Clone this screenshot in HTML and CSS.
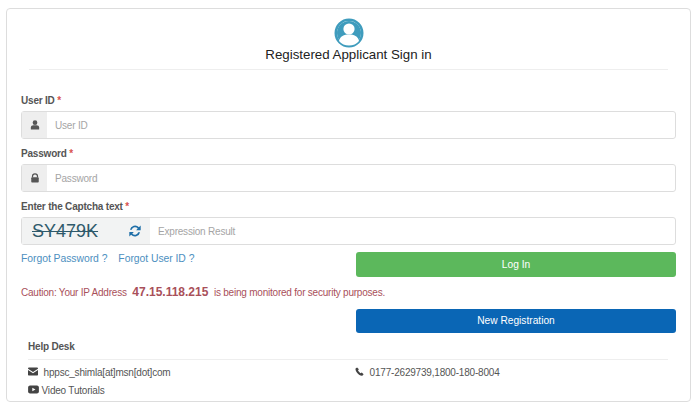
FILE: index.html
```html
<!DOCTYPE html>
<html lang="en">
<head>
    <meta charset="UTF-8">
    <meta name="viewport" content="width=device-width, initial-scale=1.0">
    <title>Registered Applicant Sign in</title>
    <link rel="stylesheet" href="styles.css">
</head>
<body>
    <div class="card">
        <div class="header">
            <svg class="avatar" viewBox="0 0 30 30" width="30" height="30">
                <circle cx="15" cy="15" r="13.2" fill="#fff" stroke="#3f9cbd" stroke-width="2.6"/>
                <circle cx="15" cy="15" r="12" fill="#3f9cbd"/>
                <circle cx="15" cy="11" r="5.6" fill="#fff"/>
                <path d="M5 23c1-5 5-6.500 10-6.500s9 1.500 10 6.500c-2.500 3-6 4.500-10 4.500s-7.500-1.500-10-4.500z" fill="#fff"/>
            </svg>
            <h2>Registered Applicant Sign in</h2>
        </div>

        <label class="field-label label-first">User ID <span class="req">*</span></label>
        <div class="input-group">
            <span class="addon">
                <svg viewBox="0 0 12 12" width="10" height="10"><circle cx="6" cy="3.200" r="2.800" fill="#555"/><path d="M1 11.500V9c0-1.800 1.500-2.800 3-2.800h4c1.500 0 3 1 3 2.800v2.500z" fill="#555"/></svg>
            </span>
            <span class="input">User ID</span>
        </div>

        <label class="field-label">Password <span class="req">*</span></label>
        <div class="input-group">
            <span class="addon">
                <svg viewBox="0 0 12 12" width="10" height="10"><path d="M3 5.500V4a3 3 0 0 1 6 0v1.500" fill="none" stroke="#555" stroke-width="1.500"/><rect x="1.500" y="5.200" width="9" height="6.300" rx="1" fill="#555"/></svg>
            </span>
            <span class="input">Password</span>
        </div>

        <label class="field-label">Enter the Captcha text <span class="req">*</span></label>
        <div class="input-group">
            <span class="addon addon-captcha">
                <span class="captcha">SY479K</span>
                <svg viewBox="0 0 16 16" width="14" height="14"><path d="M2.200 6.500A6 6 0 0 1 12.500 3.600L14.500 1.800V7H9.300l1.800-1.900A4 4 0 0 0 4.300 6.500z" fill="#1f6fa8"/><path d="M13.800 9.500A6 6 0 0 1 3.500 12.400L1.500 14.200V9h5.200l-1.800 1.900a4 4 0 0 0 6.800-1.400z" fill="#1f6fa8"/></svg>
            </span>
            <span class="input">Expression Result</span>
        </div>

        <div class="two-col action-row">
            <div class="links">
                <a href="#">Forgot Password ?</a>
                <a href="#">Forgot User ID ?</a>
            </div>
            <button class="btn btn-login">Log In</button>
        </div>

        <p class="caution">Caution: Your IP Address <b>47.15.118.215</b> is being monitored for security purposes.</p>

        <div class="two-col">
            <div></div>
            <button class="btn btn-register">New Registration</button>
        </div>

        <div class="help">
            <h4>Help Desk</h4>
            <div class="help-row">
                <span class="help-item">
                    <svg viewBox="0 0 12 10" width="10" height="9"><path d="M0 1.500A1.200 1.200 0 0 1 1.200.3h9.600A1.200 1.200 0 0 1 12 1.500v.3L6 5.600 0 1.800z" fill="#444"/><path d="M0 3.200l6 3.800 6-3.800v5.500a1 1 0 0 1-1.200 1H1.200a1 1 0 0 1-1.200-1z" fill="#444"/></svg>
                    hppsc_shimla[at]msn[dot]com
                </span>
                <span class="help-item help-phone">
                    <svg viewBox="0 0 12 12" width="9" height="9"><path d="M2.800.6L1 1.800C.3 3 .6 5 2.700 7.800 5 10.800 8 12 9.800 11.500l1.700-1.800-2.500-2.500-1.600 1C6.500 7.800 4.800 6 4 4.300l1.200-1.400z" fill="#444"/></svg>
                    0177-2629739,1800-180-8004
                </span>
            </div>
            <div class="help-video">
                <svg viewBox="0 0 12 10" width="11" height="9"><rect y=".5" width="12" height="9" rx="2.200" fill="#444"/><path d="M4.700 3v4l3.500-2z" fill="#fff"/></svg>
                Video Tutorials
            </div>
        </div>
    </div>
</body>
</html>
```

FILE: styles.css
```css
* {
    box-sizing: border-box;
}

body {
    font-family: "Liberation Sans", Arial, sans-serif;
    font-size: 10px;
    letter-spacing: -0.2px;
    color: #555;
    margin: 0;
    padding: 8px 5px 0 6px;
    background: #fff;
}

.card {
    height: 394px;
    background: white;
    padding: 9px 14px 0 14px;
    border: 1px solid #ddd;
    border-radius: 4px;
    overflow: hidden;
}

.header {
    text-align: center;
    margin: 0 8px;
    height: 52px;
    border-bottom: 1px solid #eee;
}
.avatar {
    display: block;
    margin: 0 auto;
}
.header h2 {
    font-size: 13.3px;
    font-weight: normal;
    letter-spacing: 0;
    line-height: 14px;
    color: #222;
    margin: 0;
}

.field-label {
    display: block;
    font-weight: bold;
    line-height: 12px;
    height: 12px;
    margin: 9px 0 4px 0;
}
.label-first {
    margin-top: 25px;
}
.req {
    color: #d9534f;
}

.input-group {
    display: flex;
    height: 28px;
    border: 1px solid #ddd;
    border-radius: 3px;
    background: #fff;
}
.addon {
    display: flex;
    align-items: center;
    justify-content: center;
    width: 25px;
    background: #eee;
}
.addon-captcha {
    width: 128px;
    justify-content: space-between;
    padding: 0 8px 0 10px;
    background: #f2f3f3;
}
.captcha {
    font-size: 18px;
    letter-spacing: 0;
    color: #2f5a6b;
    text-decoration: line-through;
}
.input {
    display: flex;
    align-items: center;
    padding-left: 8px;
    color: #a5a5a5;
}

.two-col {
    display: grid;
    grid-template-columns: 1fr 320px;
    gap: 15px;
}
.action-row {
    margin-top: 7px;
}
.links {
    font-size: 10.4px;
    letter-spacing: -0.05px;
    padding-top: 1px;
    display: flex;
    gap: 11px;
}
.links a {
    color: #4d8fc0;
    text-decoration: none;
}

.btn {
    height: 24.500px;
    border: none;
    border-radius: 3px;
    color: white;
    font-family: inherit;
    font-size: 10.2px;
    letter-spacing: 0;
    cursor: pointer;
}
.btn-login {
    background-color: #5cb85c;
}
.btn-register {
    background-color: #0a66b5;
}

.caution {
    color: #a9505a;
    letter-spacing: -0.22px;
    line-height: 14px;
    margin: 8px 0 9px 0;
}
.caution b {
    font-size: 12px;
    letter-spacing: 0;
    margin: 0 3px;
}

.help {
    margin: 8px 8px 0 7px;
}
.help h4 {
    font-size: 10px;
    line-height: 12px;
    margin: 0;
    padding-bottom: 6px;
    border-bottom: 1px solid #eee;
}
.help-row {
    display: grid;
    grid-template-columns: 1fr 313px;
    gap: 15px;
    margin-top: 7px;
    line-height: 12px;
}
.help-item svg {
    margin-right: 3px;
}
.help-video {
    margin-top: 6px;
    line-height: 12px;
}
```
